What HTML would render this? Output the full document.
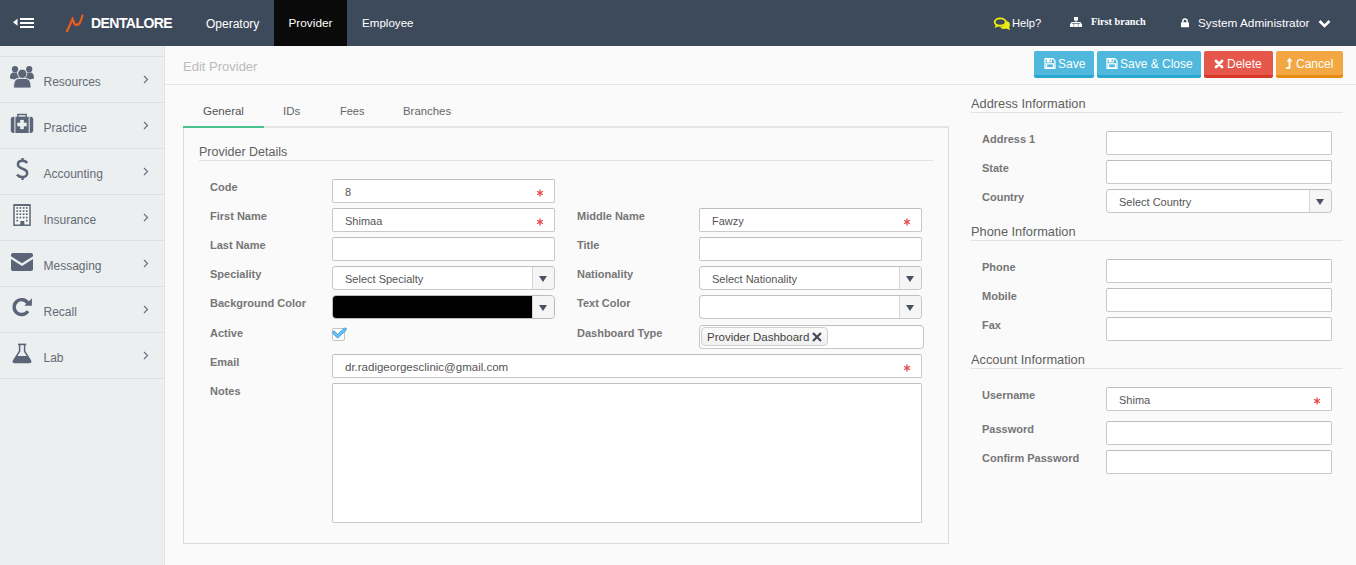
<!DOCTYPE html>
<html><head><meta charset="utf-8">
<style>
*{box-sizing:border-box;margin:0;padding:0}
html,body{width:1356px;height:565px;overflow:hidden;background:#fafafa;font-family:"Liberation Sans",sans-serif;position:relative}
.a{position:absolute}
.t{position:absolute;white-space:nowrap;line-height:1}
#hdr{left:0;top:0;width:1356px;height:46px;background:#3d4a5c}
#sb{left:0;top:46px;width:165px;height:519px;background:#eceff0;border-right:1px solid #dfe3e5}
.sl{position:absolute;left:0;width:164px;height:1px;background:#dde1e3}
.sbt{position:absolute;left:43.5px;font-size:12px;color:#646b76;margin-top:0.5px;white-space:nowrap;line-height:1}
.chev{position:absolute;left:142px;width:8px;height:8px}
.lbl{position:absolute;font-size:11px;font-weight:bold;color:#767676;white-space:nowrap;line-height:1}
.inp{position:absolute;height:24px;background:#fff;border:1px solid #c8c8c8;border-top-color:#bebebe;border-radius:2px}
.itx{position:absolute;font-size:11px;color:#555;white-space:nowrap;line-height:1}
.ast{position:absolute;color:#e0413a;font-size:13px;line-height:1;font-weight:bold}
.arr{position:absolute;top:0;right:0;width:22px;height:22px;background:#f5f5f5;border-left:1px solid #d6d6d6;border-radius:0 4px 4px 0}
.sel{border-radius:4px}
.arr:after{content:"";position:absolute;left:6px;top:9px;border-left:4px solid transparent;border-right:4px solid transparent;border-top:6px solid #4a5262}
.sec{position:absolute;font-size:12.5px;color:#606060;white-space:nowrap;line-height:1}
.ul{position:absolute;height:1px;background:#e3e3e3}
.btn{position:absolute;top:51px;height:27px;border-radius:2px;color:#fff;font-size:12px}
.btn span{position:absolute;top:7px;line-height:1;white-space:nowrap}
</style></head><body>
<!-- HEADER -->
<div id="hdr" class="a">
  <svg class="a" style="left:12px;top:16px" width="24" height="14" viewBox="0 0 24 14">
    <path d="M1 6.3 L5.5 2.8 L5.5 9.8 Z" fill="#fff"/>
    <rect x="8" y="2" width="14" height="2" fill="#fff"/>
    <rect x="8" y="6" width="14" height="2" fill="#fff"/>
    <rect x="8" y="10" width="14" height="2" fill="#fff"/>
  </svg>
  <svg class="a" style="left:64px;top:12px" width="22" height="22" viewBox="0 0 22 22">
    <path d="M3 19.3 C5 15 7 10.5 8.5 6.8 C9 7.8 9.5 9.5 10 11.2 C11 14 15 13.5 16.5 9.5 C17.5 6.5 18 5 18.5 3.5" stroke="#f05a1a" stroke-width="2.2" fill="none" stroke-linecap="round"/>
  </svg>
  <div class="t" style="left:91px;top:16px;font-size:14px;letter-spacing:-0.55px;font-weight:bold;color:#fff">DENTALORE</div>
  <div class="t" style="left:206px;top:18px;font-size:12px;color:#fff">Operatory</div>
  <div class="a" style="left:274px;top:0;width:73px;height:46px;background:#0a0a0a"></div>
  <div class="t" style="left:288.5px;top:18px;font-size:11.8px;color:#fff">Provider</div>
  <div class="t" style="left:362px;top:17px;font-size:11.6px;color:#fff">Employee</div>

  <svg class="a" style="left:990px;top:12px" width="22" height="22" viewBox="0 0 22 22">
    <path d="M16.2 8.8 C19.6 9.6 20.8 12.6 19.2 15.2 L20 18 L16.2 16.6 C13.6 17.4 11.2 16.6 10.2 15.2 C13.6 14.8 16.6 12.8 16.2 8.8 Z" fill="#eeee10"/>
    <ellipse cx="10.2" cy="10.1" rx="5.5" ry="3.7" stroke="#eeee10" stroke-width="1.9" fill="none"/>
    <path d="M5.8 12.6 L4.6 16 L9.6 13.8 Z" fill="#eeee10"/>
  </svg>
  <div class="t" style="left:1012px;top:17.5px;font-size:11.2px;color:#fff">Help?</div>
  <svg class="a" style="left:1069px;top:16px" width="14" height="12" viewBox="0 0 14 12">
    <rect x="5" y="1" width="4" height="3.6" fill="#fff"/>
    <rect x="6.5" y="4.5" width="1" height="2.5" fill="#fff"/>
    <path d="M2.6 8 V6.5 H11.4 V8" stroke="#fff" stroke-width="1" fill="none"/>
    <rect x="1" y="7.6" width="3.7" height="3.4" fill="#fff"/>
    <rect x="5.15" y="7.6" width="3.7" height="3.4" fill="#fff"/>
    <rect x="9.3" y="7.6" width="3.7" height="3.4" fill="#fff"/>
  </svg>
  <div class="t" style="left:1091px;top:17px;font-family:'Liberation Serif',serif;font-size:10.2px;font-weight:bold;color:#fff">First branch</div>
  <svg class="a" style="left:1180px;top:18px" width="10" height="10" viewBox="0 0 10 10">
    <path d="M2.9 4.5 V3 A2.1 2.1 0 0 1 7.1 3 V4.5" stroke="#fff" stroke-width="1.5" fill="none"/>
    <rect x="1" y="4.2" width="8" height="5" rx="0.5" fill="#fff"/>
  </svg>
  <div class="t" style="left:1198px;top:17.5px;font-size:11.8px;color:#fff">System Administrator</div>
  <svg class="a" style="left:1318px;top:19px" width="13" height="9" viewBox="0 0 13 9">
    <path d="M1.5 2 L6.5 7 L11.5 2" stroke="#fff" stroke-width="2.6" fill="none"/>
  </svg>
</div>

<!-- SIDEBAR -->
<div id="sb" class="a">
</div>
<div class="sl" style="top:56px"></div>
<div class="sl" style="top:102px"></div>
<div class="sl" style="top:148px"></div>
<div class="sl" style="top:194px"></div>
<div class="sl" style="top:240px"></div>
<div class="sl" style="top:286px"></div>
<div class="sl" style="top:332px"></div>
<div class="sl" style="top:378px"></div>

<div class="sbt" style="top:75px">Resources</div>
<div class="sbt" style="top:121px">Practice</div>
<div class="sbt" style="top:167px">Accounting</div>
<div class="sbt" style="top:213px">Insurance</div>
<div class="sbt" style="top:259px">Messaging</div>
<div class="sbt" style="top:305px">Recall</div>
<div class="sbt" style="top:351px">Lab</div>

<!-- chevrons -->
<svg class="a" style="left:142px;top:75px" width="8" height="9" viewBox="0 0 8 9"><path d="M2 1 L5.5 4.5 L2 8" stroke="#6b7280" stroke-width="1.2" fill="none"/></svg>
<svg class="a" style="left:142px;top:121px" width="8" height="9" viewBox="0 0 8 9"><path d="M2 1 L5.5 4.5 L2 8" stroke="#6b7280" stroke-width="1.2" fill="none"/></svg>
<svg class="a" style="left:142px;top:167px" width="8" height="9" viewBox="0 0 8 9"><path d="M2 1 L5.5 4.5 L2 8" stroke="#6b7280" stroke-width="1.2" fill="none"/></svg>
<svg class="a" style="left:142px;top:213px" width="8" height="9" viewBox="0 0 8 9"><path d="M2 1 L5.5 4.5 L2 8" stroke="#6b7280" stroke-width="1.2" fill="none"/></svg>
<svg class="a" style="left:142px;top:259px" width="8" height="9" viewBox="0 0 8 9"><path d="M2 1 L5.5 4.5 L2 8" stroke="#6b7280" stroke-width="1.2" fill="none"/></svg>
<svg class="a" style="left:142px;top:305px" width="8" height="9" viewBox="0 0 8 9"><path d="M2 1 L5.5 4.5 L2 8" stroke="#6b7280" stroke-width="1.2" fill="none"/></svg>
<svg class="a" style="left:142px;top:351px" width="8" height="9" viewBox="0 0 8 9"><path d="M2 1 L5.5 4.5 L2 8" stroke="#6b7280" stroke-width="1.2" fill="none"/></svg>

<svg class="a" style="left:10px;top:66px" width="24" height="22" viewBox="0 0 24 22">
<circle cx="5" cy="3.2" r="3.1" fill="#5b6577"/><circle cx="19.2" cy="3.2" r="3.1" fill="#5b6577"/>
<path d="M0 12.5 C0 8 1.5 6.5 4 6.5 L7 6.5 C7.5 9 8.5 10.5 9.5 11.5 C6.5 12 5 13 4.5 13.5 Z" fill="#5b6577"/>
<path d="M24 12.5 C24 8 22.5 6.5 20 6.5 L17 6.5 C16.5 9 15.5 10.5 14.5 11.5 C17.5 12 19 13 19.5 13.5 Z" fill="#5b6577"/>
<circle cx="12.3" cy="7.8" r="4.6" stroke="#eceff0" stroke-width="0.8" fill="#5b6577"/>
<path d="M3.6 21 C3.6 15 6 12.5 9 12.5 L15.5 12.5 C18.5 12.5 21 15 21 21 C21 21.6 20.6 22 20 22 L4.6 22 C4 22 3.6 21.6 3.6 21 Z" stroke="#eceff0" stroke-width="0.8" fill="#5b6577"/>
</svg>
<svg class="a" style="left:10px;top:113px" width="24" height="21" viewBox="0 0 24 21">
<rect x="7.8" y="1.5" width="8.4" height="3" stroke="#5b6577" stroke-width="1.4" fill="none"/>
<path d="M4.4 3.8 V20 H3.2 C1.8 20 0.8 19 0.8 17.6 V6.2 C0.8 4.8 1.8 3.8 3.2 3.8 Z" fill="#5b6577"/>
<path d="M19.7 3.8 V20 H20.8 C22.2 20 23.2 19 23.2 17.6 V6.2 C23.2 4.8 22.2 3.8 20.8 3.8 Z" fill="#5b6577"/>
<rect x="5.4" y="3.8" width="13.3" height="16.2" fill="#5b6577"/>
<rect x="10.2" y="6.9" width="3.6" height="9.2" fill="#eceff0"/>
<rect x="7.3" y="9.7" width="9.4" height="3.6" fill="#eceff0"/>
</svg>
<svg class="a" style="left:16px;top:158px" width="13" height="22" viewBox="0 0 13 22"><rect x="5.4" y="0" width="2.3" height="3.5" fill="#5b6577"/><rect x="5.4" y="18.5" width="2.3" height="3.5" fill="#5b6577"/><path d="M11.3 4.8 C10 3.4 8.4 2.8 6.5 2.8 C3.6 2.8 1.9 4.4 1.9 6.6 C1.9 11.8 11.2 9.6 11.2 14.9 C11.2 17.4 9.2 19.1 6.3 19.1 C4.1 19.1 2.3 18.2 1 16.6" stroke="#5b6577" stroke-width="2.5" fill="none"/></svg>
<svg class="a" style="left:13px;top:204px" width="19" height="22" viewBox="0 0 19 22">
<rect x="1" y="0.9" width="16" height="20.3" stroke="#5b6577" stroke-width="1.5" fill="#f6f8f8"/>
<rect x="1" y="0.4" width="16" height="1.6" fill="#5b6577"/>
<g fill="#5b6577"><rect x="3.4000000000000004" y="3.0999999999999996" width="1.7" height="1.7"/><rect x="6.5" y="3.0999999999999996" width="1.7" height="1.7"/><rect x="9.799999999999999" y="3.0999999999999996" width="1.7" height="1.7"/><rect x="12.899999999999999" y="3.0999999999999996" width="1.7" height="1.7"/><rect x="3.4000000000000004" y="6.2" width="1.7" height="1.7"/><rect x="6.5" y="6.2" width="1.7" height="1.7"/><rect x="9.799999999999999" y="6.2" width="1.7" height="1.7"/><rect x="12.899999999999999" y="6.2" width="1.7" height="1.7"/><rect x="3.4000000000000004" y="9.299999999999999" width="1.7" height="1.7"/><rect x="6.5" y="9.299999999999999" width="1.7" height="1.7"/><rect x="9.799999999999999" y="9.299999999999999" width="1.7" height="1.7"/><rect x="12.899999999999999" y="9.299999999999999" width="1.7" height="1.7"/><rect x="3.4000000000000004" y="12.7" width="1.7" height="1.7"/><rect x="6.5" y="12.7" width="1.7" height="1.7"/><rect x="9.799999999999999" y="12.7" width="1.7" height="1.7"/><rect x="12.899999999999999" y="12.7" width="1.7" height="1.7"/><rect x="3.4" y="15.8" width="1.7" height="1.7"/><rect x="12.9" y="15.8" width="1.7" height="1.7"/><rect x="7.3" y="17" width="4" height="4.2"/></g>
</svg>
<svg class="a" style="left:11px;top:253px" width="22" height="18" viewBox="0 0 22 18">
<path d="M0 2 C0 0.8 0.8 0 2 0 H20 C21.2 0 22 0.8 22 2 V3.2 L11 10.2 L0 3.2 Z" fill="#5b6577"/>
<path d="M0 6 L11 13 L22 6 V16 C22 17.2 21.2 18 20 18 H2 C0.8 18 0 17.2 0 16 Z" fill="#5b6577"/>
</svg>
<svg class="a" style="left:10px;top:295px" width="24" height="25" viewBox="0 0 24 25">
<path d="M17.92 16.05 A7.45 7.45 0 1 1 18.05 8.38" stroke="#5b6577" stroke-width="3.4" fill="none"/>
<path d="M21.9 3.2 V10.7 H14.3 Z" fill="#5b6577"/>
</svg>
<svg class="a" style="left:12px;top:343px" width="20" height="21" viewBox="0 0 20 21">
<rect x="6" y="0.6" width="8.2" height="1.6" fill="#5b6577"/>
<path d="M7.6 2 V8.2 L1.6 17.6 C1 18.6 1.4 19.5 2.6 19.5 H17.4 C18.6 19.5 19 18.6 18.4 17.6 L12.6 8.2 V2" stroke="#5b6577" stroke-width="1.5" fill="none"/>
<path d="M4.5 13 H15.5 L18.6 18 C19 19 18.6 19.7 17.4 19.7 H2.6 C1.4 19.7 1 19 1.4 18 Z" fill="#5b6577"/>
</svg>


<!-- MAIN HEADER -->
<div class="t" style="left:183px;top:60px;font-size:13px;color:#bcbcbc">Edit Provider</div>
<div class="a" style="left:165px;top:84px;width:1191px;height:1px;background:#e6e6e6"></div>

<div class="btn" style="left:1034px;width:60px;background:#4fb8dc;border-bottom:3px solid #2aa6d3"><svg class="a" style="left:10px;top:7px" width="12" height="11" viewBox="0 0 12 11"><path d="M1 0.7 H8.8 L11 2.9 V10.3 H1 Z" stroke="#fff" stroke-width="1.3" fill="none"/><rect x="2.6" y="1" width="5.2" height="3.4" fill="#fff"/><rect x="5.6" y="1.4" width="1.2" height="2" fill="#4fb8dc"/><rect x="2.6" y="5.8" width="6.8" height="4" stroke="#fff" stroke-width="1.2" fill="none"/></svg><span style="left:24px">Save</span></div>
<div class="btn" style="left:1097px;width:104px;background:#4fb8dc;border-bottom:3px solid #2aa6d3"><svg class="a" style="left:9px;top:7px" width="12" height="11" viewBox="0 0 12 11"><path d="M1 0.7 H8.8 L11 2.9 V10.3 H1 Z" stroke="#fff" stroke-width="1.3" fill="none"/><rect x="2.6" y="1" width="5.2" height="3.4" fill="#fff"/><rect x="5.6" y="1.4" width="1.2" height="2" fill="#4fb8dc"/><rect x="2.6" y="5.8" width="6.8" height="4" stroke="#fff" stroke-width="1.2" fill="none"/></svg><span style="left:23px">Save &amp; Close</span></div>
<div class="btn" style="left:1204px;width:69px;background:#e5574a;border-bottom:3px solid #d9372a"><svg class="a" style="left:10px;top:8px" width="10" height="10" viewBox="0 0 10 10"><path d="M2 2 L8 8 M8 2 L2 8" stroke="#fff" stroke-width="2.8" stroke-linecap="round"/></svg><span style="left:23px">Delete</span></div>
<div class="btn" style="left:1276px;width:67px;background:#f2a742;border-bottom:3px solid #e88d12"><svg class="a" style="left:9px;top:6px" width="9" height="12" viewBox="0 0 9 12"><path d="M1 10.8 H4.5 V3" stroke="#fff" stroke-width="1.8" fill="none"/><path d="M1.5 4.5 L4.5 0.8 L7.5 4.5 Z" fill="#fff"/></svg><span style="left:20px">Cancel</span></div>
<!-- TABS -->
<div class="t" style="left:203px;top:105.5px;font-size:11.5px;color:#555">General</div>
<div class="t" style="left:283px;top:105.5px;font-size:11.5px;color:#666">IDs</div>
<div class="t" style="left:340px;top:106px;font-size:11px;color:#666">Fees</div>
<div class="t" style="left:403px;top:105.5px;font-size:11.4px;color:#666">Branches</div>
<div class="a" style="left:183px;top:126px;width:766px;height:2px;background:#e4e4e4"></div>
<div class="a" style="left:183px;top:126px;width:81px;height:2px;background:#47c28d"></div>
<div class="a" style="left:183px;top:128px;width:766px;height:416px;border:1px solid #dcdcdc;border-top:none"></div>

<!-- FORM -->
<div class="sec" style="left:199px;top:146px">Provider Details</div>
<div class="ul" style="left:199px;top:160px;width:734px"></div>

<div class="lbl" style="left:210px;top:182px">Code</div>
<div class="lbl" style="left:210px;top:211px">First Name</div>
<div class="lbl" style="left:210px;top:240px">Last Name</div>
<div class="lbl" style="left:210px;top:269px">Speciality</div>
<div class="lbl" style="left:210px;top:298px">Background Color</div>
<div class="lbl" style="left:210px;top:328px">Active</div>
<div class="lbl" style="left:210px;top:357px">Email</div>
<div class="lbl" style="left:210px;top:386px">Notes</div>

<div class="lbl" style="left:577px;top:211px">Middle Name</div>
<div class="lbl" style="left:577px;top:240px">Title</div>
<div class="lbl" style="left:577px;top:269px">Nationality</div>
<div class="lbl" style="left:577px;top:298px">Text Color</div>
<div class="lbl" style="left:577px;top:328px">Dashboard Type</div>

<div class="inp" style="left:332px;top:179px;width:223px"><div class="itx" style="left:12px;top:7px">8</div><svg class="a" style="left:203px;top:9px" width="8" height="8" viewBox="0 0 8 8"><path d="M4 0.6 V7.4 M1.1 2.3 L6.9 5.7 M6.9 2.3 L1.1 5.7" stroke="#e8484a" stroke-width="1.3"/></svg></div>
<div class="inp" style="left:332px;top:208px;width:223px"><div class="itx" style="left:12px;top:7px">Shimaa</div><svg class="a" style="left:203px;top:9px" width="8" height="8" viewBox="0 0 8 8"><path d="M4 0.6 V7.4 M1.1 2.3 L6.9 5.7 M6.9 2.3 L1.1 5.7" stroke="#e8484a" stroke-width="1.3"/></svg></div>
<div class="inp" style="left:332px;top:237px;width:223px"></div>
<div class="inp sel" style="left:332px;top:266px;width:223px"><div class="itx" style="left:12px;top:7px">Select Specialty</div><div class="arr"></div></div>
<div class="inp sel" style="left:332px;top:295px;width:223px;border-color:#bbb"><div class="a" style="left:0;top:0;width:199px;height:22px;background:#000;border-radius:3px 0 0 3px"></div><div class="arr"></div></div>

<div class="inp" style="left:699px;top:208px;width:223px"><div class="itx" style="left:12px;top:7px">Fawzy</div><svg class="a" style="left:203px;top:9px" width="8" height="8" viewBox="0 0 8 8"><path d="M4 0.6 V7.4 M1.1 2.3 L6.9 5.7 M6.9 2.3 L1.1 5.7" stroke="#e8484a" stroke-width="1.3"/></svg></div>
<div class="inp" style="left:699px;top:237px;width:223px"></div>
<div class="inp sel" style="left:699px;top:266px;width:223px"><div class="itx" style="left:12px;top:7px">Select Nationality</div><div class="arr"></div></div>
<div class="inp sel" style="left:699px;top:295px;width:223px"><div class="arr"></div></div>
<div class="inp" style="left:699px;top:325px;width:225px;border-radius:4px">
  <div class="a" style="left:1px;top:1px;width:127px;height:19px;background:linear-gradient(#fafafa,#f0f0f0);border:1px solid #cfcfcf;border-radius:4px"></div>
  <div class="itx" style="left:7px;top:6px;font-size:11.5px;color:#444">Provider Dashboard</div>
  <svg class="a" style="left:111px;top:5px" width="12" height="12" viewBox="0 0 12 12"><path d="M2 2 L10 10 M10 2 L2 10" stroke="#434b59" stroke-width="2.2"/></svg>
</div>

<!-- checkbox -->
<div class="a" style="left:332px;top:328px;width:13px;height:13px;border:1px solid #c4c4c4;border-radius:2px;background:#fff"></div>
<svg class="a" style="left:332px;top:327px" width="16" height="14" viewBox="0 0 16 14"><path d="M2 5.6 L5.6 9.4 L13 2.2" stroke="#3d9de2" stroke-width="3.4" fill="none" stroke-linecap="round" stroke-linejoin="round"/><path d="M2 5.6 L5.6 9.4 L13 2.2" stroke="#6cc6f6" stroke-width="1.8" fill="none" stroke-linecap="round" stroke-linejoin="round"/></svg>

<div class="inp" style="left:332px;top:354px;width:590px"><div class="itx" style="left:12px;top:7px;font-size:11.5px">dr.radigeorgesclinic@gmail.com</div><svg class="a" style="left:570px;top:9px" width="8" height="8" viewBox="0 0 8 8"><path d="M4 0.6 V7.4 M1.1 2.3 L6.9 5.7 M6.9 2.3 L1.1 5.7" stroke="#e8484a" stroke-width="1.3"/></svg></div>
<div class="inp" style="left:332px;top:383px;width:590px;height:140px"></div>

<!-- RIGHT COLUMN -->
<div class="sec" style="left:971px;top:98px;font-size:12.8px">Address Information</div>
<div class="ul" style="left:971px;top:112px;width:372px"></div>
<div class="lbl" style="left:982px;top:134px">Address 1</div>
<div class="lbl" style="left:982px;top:163px">State</div>
<div class="lbl" style="left:982px;top:192px">Country</div>
<div class="inp" style="left:1106px;top:131px;width:226px"></div>
<div class="inp" style="left:1106px;top:160px;width:226px"></div>
<div class="inp sel" style="left:1106px;top:189px;width:226px"><div class="itx" style="left:12px;top:7px">Select Country</div><div class="arr"></div></div>

<div class="sec" style="left:971px;top:226px;font-size:12.8px">Phone Information</div>
<div class="ul" style="left:971px;top:240px;width:372px"></div>
<div class="lbl" style="left:982px;top:262px">Phone</div>
<div class="lbl" style="left:982px;top:291px">Mobile</div>
<div class="lbl" style="left:982px;top:320px">Fax</div>
<div class="inp" style="left:1106px;top:259px;width:226px"></div>
<div class="inp" style="left:1106px;top:288px;width:226px"></div>
<div class="inp" style="left:1106px;top:317px;width:226px"></div>

<div class="sec" style="left:971px;top:354px;font-size:12.8px">Account Information</div>
<div class="ul" style="left:971px;top:368px;width:372px"></div>
<div class="lbl" style="left:982px;top:390px">Username</div>
<div class="lbl" style="left:982px;top:424px">Password</div>
<div class="lbl" style="left:982px;top:453px">Confirm Password</div>
<div class="inp" style="left:1106px;top:387px;width:226px"><div class="itx" style="left:12px;top:7px">Shima</div><svg class="a" style="left:206px;top:9px" width="8" height="8" viewBox="0 0 8 8"><path d="M4 0.6 V7.4 M1.1 2.3 L6.9 5.7 M6.9 2.3 L1.1 5.7" stroke="#e8484a" stroke-width="1.3"/></svg></div>
<div class="inp" style="left:1106px;top:421px;width:226px"></div>
<div class="inp" style="left:1106px;top:450px;width:226px"></div>

</body></html>
